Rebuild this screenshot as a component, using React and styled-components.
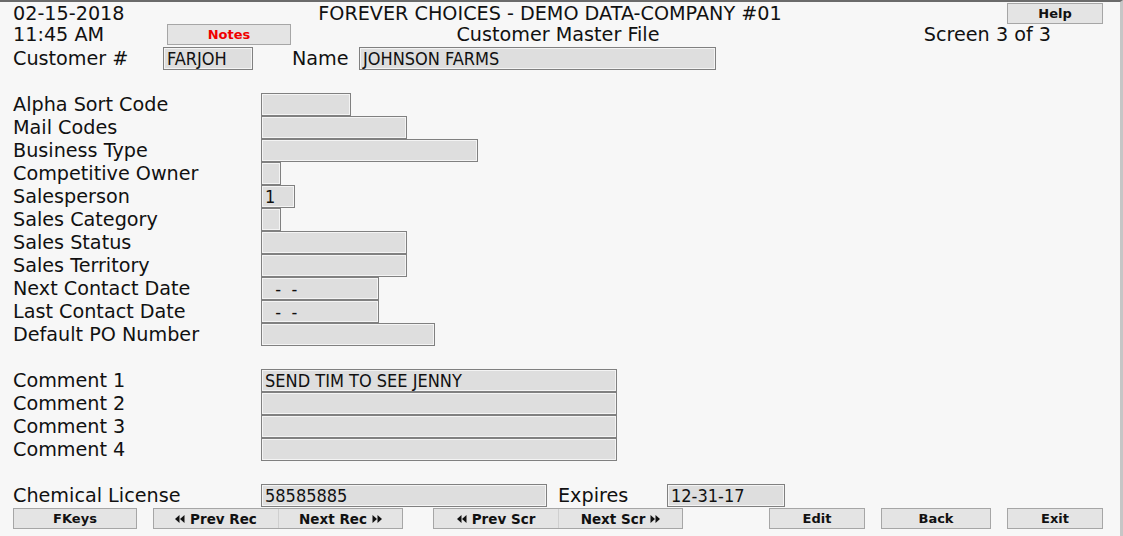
import React from 'react'
import styled, { createGlobalStyle } from 'styled-components'

const GlobalStyle = createGlobalStyle`
    html, body {
        margin: 0;
        padding: 0;
        background: #f7f7f7;
    }
    body {
        font-family: "DejaVu Sans", Verdana, sans-serif;
        color: #111;
    }
`

const Screen = styled.div`
    width: 1123px;
    height: 536px;
    box-sizing: border-box;
    border-top: 2px solid #6b6b6b;
    border-right: 3px solid #c6c6c6;
    background: #f7f7f7;
    padding: 0 17px 0 13px;
    display: flex;
    flex-direction: column;
    overflow: hidden;
`

const HeadRow = styled.div`
    display: grid;
    grid-template-columns: 1fr auto 1fr;
    align-items: center;
    height: ${({ h }) => h || 23}px;
`

const Text = styled.div`
    font-size: 19.2px;
    line-height: 23px;
    white-space: nowrap;
    justify-self: ${({ align }) => align || 'start'};
    margin-right: ${({ mr }) => mr || 0}px;
`

const Left = styled.div`
    display: flex;
    align-items: center;
`

const Button = styled.button`
    box-sizing: border-box;
    width: ${({ w }) => w}px;
    height: 21px;
    padding: 0;
    margin: 0;
    border: 1px solid #a6a6a6;
    background: #e4e4e4;
    font-family: "DejaVu Sans", Verdana, sans-serif;
    font-weight: bold;
    font-size: 13px;
    color: ${({ red }) => (red ? '#f00000' : '#111')};
    display: flex;
    align-items: center;
    justify-content: center;
    gap: 4px;
    justify-self: ${({ align }) => align || 'start'};
`

const Field = styled.div`
    box-sizing: border-box;
    width: ${({ w }) => w}px;
    height: 23px;
    border: 1px solid #808080;
    box-shadow: inset 0 0 0 1px #f4f4f4;
    background: #dedede;
    font-family: "DejaVu Sans Condensed", "Liberation Sans Narrow", "Liberation Sans", sans-serif;
    font-size: 18px;
    line-height: 21px;
    padding-left: 3px;
    white-space: pre;
    color: #111;
`

const CustomerRow = styled.div`
    display: flex;
    align-items: center;
    height: 23px;
    margin-top: 1px;
`

const Label = styled.div`
    font-size: 19.2px;
    line-height: 23px;
    width: ${({ w }) => w || 248}px;
    white-space: nowrap;
`

const FormGrid = styled.div`
    display: grid;
    grid-template-columns: 248px auto;
    grid-auto-rows: 23px;
    margin-top: 23px;
    align-items: center;
`

const LicenseRow = styled.div`
    display: flex;
    align-items: center;
    height: 23px;
    margin-top: 23px;
`

const FooterBar = styled.div`
    display: flex;
    align-items: center;
    margin-top: 1px;
`

const SplitGroup = styled.div`
    box-sizing: border-box;
    display: flex;
    height: 21px;
    border: 1px solid #a6a6a6;
    background: #e4e4e4;
    margin-left: ${({ ml }) => ml || 0}px;
`

const SplitHalf = styled.button`
    box-sizing: border-box;
    width: ${({ w }) => w}px;
    height: 19px;
    border: none;
    padding: 0;
    background: transparent;
    font-family: "DejaVu Sans", Verdana, sans-serif;
    font-weight: bold;
    font-size: 13.5px;
    color: #111;
    display: flex;
    align-items: center;
    justify-content: center;
    gap: 5px;
    & + & {
        border-left: 1px solid #cfcfcf;
    }
`

const Spacer = styled.div`
    width: ${({ w }) => w}px;
    flex: none;
`

const Arrows = ({ dir }) => (
    <svg width="10" height="8" viewBox="0 0 10 8">
        {dir === 'left' ? (
            <g fill="#111">
                <polygon points="0,4 4.5,0 4.5,8" />
                <polygon points="5,4 9.5,0 9.5,8" />
            </g>
        ) : (
            <g fill="#111">
                <polygon points="0.5,0 5,4 0.5,8" />
                <polygon points="5.5,0 10,4 5.5,8" />
            </g>
        )}
    </svg>
)

const fields = [
    { label: 'Alpha Sort Code', w: 90 },
    { label: 'Mail Codes', w: 146 },
    { label: 'Business Type', w: 217 },
    { label: 'Competitive Owner', w: 20 },
    { label: 'Salesperson', w: 34, value: '1' },
    { label: 'Sales Category', w: 20 },
    { label: 'Sales Status', w: 146 },
    { label: 'Sales Territory', w: 146 },
    { label: 'Next Contact Date', w: 118, value: '  -  -' },
    { label: 'Last Contact Date', w: 118, value: '  -  -' },
    { label: 'Default PO Number', w: 174 },
]

const comments = ['SEND TIM TO SEE JENNY', '', '', '']

export default function App() {
    return (
        <>
            <GlobalStyle />
            <Screen>
                <HeadRow h={21}>
                    <Text>02-15-2018</Text>
                    <Text align="center" mr={16}>FOREVER CHOICES - DEMO DATA-COMPANY #01</Text>
                    <Button w={96} align="end">Help</Button>
                </HeadRow>
                <HeadRow h={23}>
                    <Left>
                        <Label w={154}>11:45 AM</Label>
                        <Button w={124} red>Notes</Button>
                    </Left>
                    <Text align="center">Customer Master File</Text>
                    <Text align="end" mr={52}>Screen 3 of 3</Text>
                </HeadRow>
                <CustomerRow>
                    <Label w={150}>Customer #</Label>
                    <Field w={90}>FARJOH</Field>
                    <Spacer w={39} />
                    <Label w={67}>Name</Label>
                    <Field w={357}>JOHNSON FARMS</Field>
                </CustomerRow>

                <FormGrid>
                    {fields.map((f) => (
                        <React.Fragment key={f.label}>
                            <Label>{f.label}</Label>
                            <Field w={f.w}>{f.value || ''}</Field>
                        </React.Fragment>
                    ))}
                </FormGrid>

                <FormGrid>
                    {comments.map((c, i) => (
                        <React.Fragment key={i}>
                            <Label>Comment {i + 1}</Label>
                            <Field w={356}>{c}</Field>
                        </React.Fragment>
                    ))}
                </FormGrid>

                <LicenseRow>
                    <Label>Chemical License</Label>
                    <Field w={286}>58585885</Field>
                    <Spacer w={11} />
                    <Label w={109}>Expires</Label>
                    <Field w={118}>12-31-17</Field>
                </LicenseRow>

                <FooterBar>
                    <Button w={124}>FKeys</Button>
                    <SplitGroup ml={16}>
                        <SplitHalf w={124}><Arrows dir="left" />Prev Rec</SplitHalf>
                        <SplitHalf w={124}>Next Rec<Arrows dir="right" /></SplitHalf>
                    </SplitGroup>
                    <SplitGroup ml={30}>
                        <SplitHalf w={124}><Arrows dir="left" />Prev Scr</SplitHalf>
                        <SplitHalf w={124}>Next Scr<Arrows dir="right" /></SplitHalf>
                    </SplitGroup>
                    <Spacer w={86} />
                    <Button w={96}>Edit</Button>
                    <Spacer w={16} />
                    <Button w={110}>Back</Button>
                    <Spacer w={16} />
                    <Button w={96}>Exit</Button>
                </FooterBar>
            </Screen>
        </>
    )
}
